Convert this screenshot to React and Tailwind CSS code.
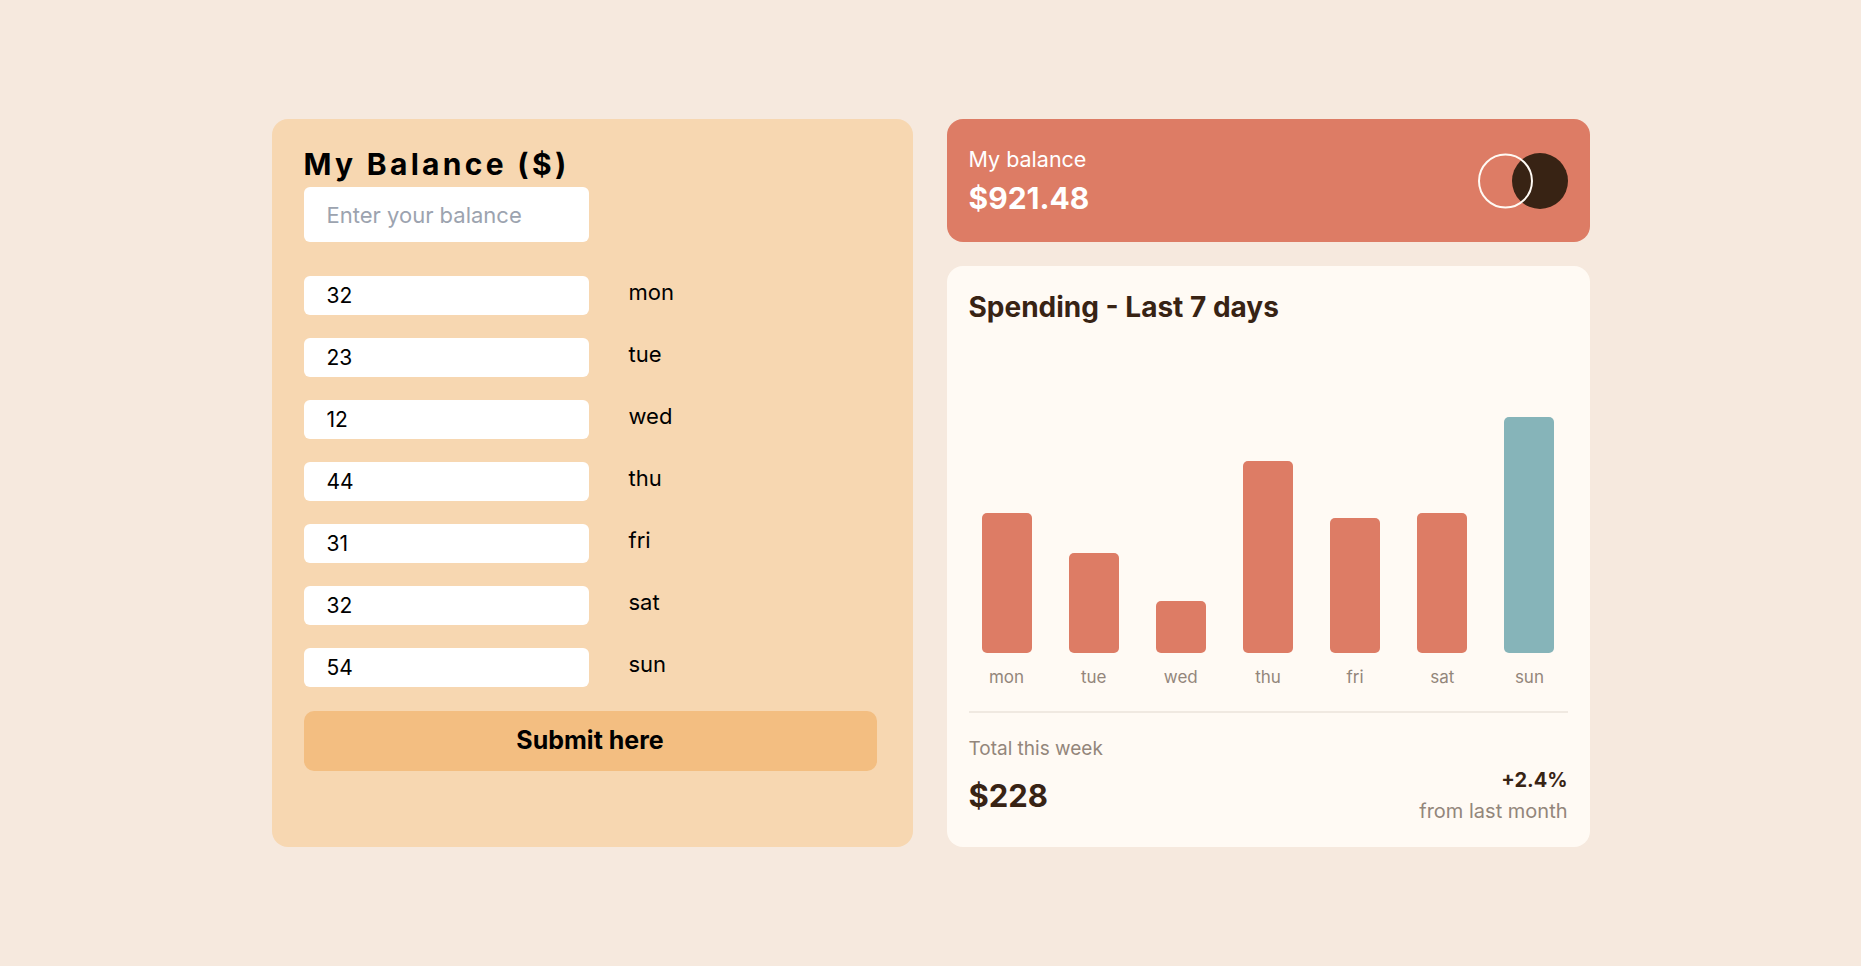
import React from "react";

const days = [
  { day: "mon", amount: 32 },
  { day: "tue", amount: 23 },
  { day: "wed", amount: 12 },
  { day: "thu", amount: 44 },
  { day: "fri", amount: 31 },
  { day: "sat", amount: 32 },
  { day: "sun", amount: 54 },
];

const BalanceForm = () => {
  return (
    <div className="w-[641px] shrink-0 rounded-2xl bg-[#f7d7b1] pl-8 pr-9 pt-[27px]">
      <h1 className="text-[30px] leading-9 font-bold tracking-[0.11em] text-black">
        My Balance ($)
      </h1>
      <input
        type="text"
        placeholder="Enter your balance"
        className="mt-[5px] block h-[55px] w-[285px] rounded-md bg-white pl-[23px] text-[22px] text-black outline-none placeholder:text-[#9ca3af]"
      />
      <div className="mt-[34px] flex flex-col gap-[23px]">
        {days.map((d) => (
          <div key={d.day} className="flex items-center">
            <input
              type="text"
              defaultValue={d.amount}
              className="block h-[39px] w-[285px] rounded-md bg-white pl-[23px] text-[21px] text-black outline-none"
            />
            <span className="ml-[40px] pb-[6px] text-[22px] text-black">{d.day}</span>
          </div>
        ))}
      </div>
      <button className="mt-6 flex h-[60px] w-[573px] items-center justify-center rounded-[10px] bg-[#f3be81] text-[25px] font-bold text-black">
        Submit here
      </button>
    </div>
  );
};

const Logo = () => (
  <svg width="90" height="56" viewBox="0 0 90 56">
    <circle cx="62" cy="28" r="28" fill="#382314" />
    <circle cx="27.5" cy="28" r="26.5" fill="none" stroke="#fffaf4" strokeWidth="2" />
  </svg>
);

const BalanceCard = () => (
  <div className="flex h-[123px] items-center justify-between rounded-2xl bg-[#dd7c65] pl-[22px] pr-[22px]">
    <div className="text-white">
      <p className="text-[21.5px] leading-7">My balance</p>
      <p className="mt-[7px] text-[30px] leading-9 font-bold">$921.48</p>
    </div>
    <Logo />
  </div>
);

const SpendingCard = () => {
  return (
    <div className="mt-6 flex-1 rounded-2xl bg-[#fffaf4] px-[22px] pt-[23px] pb-[22px]">
      <h2 className="text-[28px] leading-9 font-bold text-[#382314]">Spending - Last 7 days</h2>
      <div className="flex h-[328px] items-end justify-between px-[13px]">
        {days.map((d) => (
          <div
            key={d.day}
            className={
              d.day === "sun"
                ? "w-[50px] rounded-[5px] bg-[#86b4b9]"
                : "w-[50px] rounded-[5px] bg-[#dd7c65]"
            }
            style={{ height: `${d.amount * 4.365}px` }}
          />
        ))}
      </div>
      <div className="mt-3 flex justify-between px-[13px]">
        {days.map((d) => (
          <span key={d.day} className="w-[50px] text-center text-[17px] leading-6 text-[#93867b]">
            {d.day}
          </span>
        ))}
      </div>
      <div className="mt-[22px] h-[2px] bg-[#f0e9e1]" />
      <p className="mt-[22px] text-[19px] leading-7 text-[#93867b]">Total this week</p>
      <div className="mt-1 flex items-center justify-between">
        <p className="text-[31px] leading-9 font-bold text-[#382314]">$228</p>
        <div className="text-right">
          <p className="text-[20px] leading-[26px] font-bold text-[#382314]">+2.4%</p>
          <p className="mt-[4px] text-[20px] leading-7 text-[#93867b]">from last month</p>
        </div>
      </div>
    </div>
  );
};

const App = () => {
  return (
    <div className="min-h-screen bg-[#f6e9de] pt-[119px] font-[Inter,sans-serif]">
      <div className="mx-auto flex w-[1318px] gap-[34px]">
        <BalanceForm />
        <div className="flex w-[643px] shrink-0 flex-col">
          <BalanceCard />
          <SpendingCard />
        </div>
      </div>
    </div>
  );
};

export default App;
